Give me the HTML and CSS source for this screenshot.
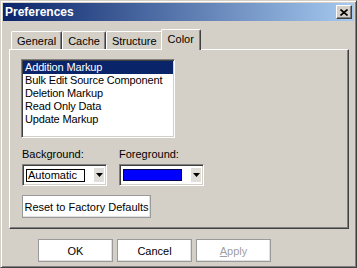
FILE: index.html
```html
<!doctype html>
<html>
<head>
<meta charset="utf-8">
<meta name="viewport" content="width=device-width, initial-scale=1">
<link rel="stylesheet" href="styles.css">
</head>
<body>
<div class="window">
    <div class="titlebar">
        <span class="titlebar__title">Preferences</span>
        <div class="titlebar__close">
            <svg width="8" height="7" viewBox="0 0 8 7"><path d="M0.5 0.5L7.5 6.5M7.5 0.5L0.5 6.5" stroke="#000" stroke-width="1.6" fill="none"/></svg>
        </div>
    </div>
    <div class="content">
        <div class="tabs">
            <div class="tab">General</div>
            <div class="tab">Cache</div>
            <div class="tab">Structure</div>
            <div class="tab tab--active">Color</div>
        </div>
        <div class="panel">
            <div class="list">
                <div class="list__item list__item--selected">Addition Markup</div>
                <div class="list__item">Bulk Edit Source Component</div>
                <div class="list__item">Deletion Markup</div>
                <div class="list__item">Read Only Data</div>
                <div class="list__item">Update Markup</div>
            </div>
            <div class="fields">
                <div class="field">
                    <div class="field__label">Background:</div>
                    <div class="combo">
                        <div class="combo__value">Automatic</div>
                        <div class="combo__arrow"><svg width="7" height="4" viewBox="0 0 7 4"><polygon points="0,0 7,0 3.5,4" fill="#000"/></svg></div>
                    </div>
                </div>
                <div class="field">
                    <div class="field__label">Foreground:</div>
                    <div class="combo">
                        <div class="combo__swatch"></div>
                        <div class="combo__arrow"><svg width="7" height="4" viewBox="0 0 7 4"><polygon points="0,0 7,0 3.5,4" fill="#000"/></svg></div>
                    </div>
                </div>
            </div>
            <div class="button button--reset">Reset to Factory Defaults</div>
        </div>
        <div class="actions">
            <div class="button">OK</div>
            <div class="button">Cancel</div>
            <div class="button button--disabled"><u>A</u>pply</div>
        </div>
    </div>
</div>
</body>
</html>
```

FILE: styles.css
```css
body {
    margin: 0;
    font-family: "Liberation Sans", Arial, sans-serif;
    font-size: 11px;
    background-color: #d4d0c8;
}
.window {
    width: 357px;
    height: 268px;
    box-sizing: border-box;
    border: 1px solid;
    border-color: #d4d0c8 #404040 #404040 #d4d0c8;
    box-shadow: inset 1px 1px #fff, inset -1px -1px #808080;
    padding: 2px;
    background-color: #d4d0c8;
    display: flex;
    flex-direction: column;
}
.titlebar {
    height: 18px;
    display: flex;
    align-items: center;
    justify-content: space-between;
    padding: 0 2px;
    background: linear-gradient(to right, #0a246a, #a6caf0);
}
.titlebar__title {
    color: white;
    font-weight: bold;
    font-size: 12px;
}
.titlebar__close {
    width: 16px;
    height: 14px;
    box-sizing: border-box;
    display: flex;
    align-items: center;
    justify-content: center;
    background-color: #d4d0c8;
    border: 1px solid;
    border-color: #fff #404040 #404040 #fff;
    box-shadow: inset -1px -1px #808080;
}
.content {
    padding: 8px 0 0 6px;
}
.tabs {
    display: flex;
    align-items: flex-end;
    height: 20px;
    padding-left: 2px;
}
.tab {
    height: 18px;
    box-sizing: border-box;
    padding: 2px 5px 0 5px;
    line-height: 14px;
    border-top: 1px solid #fff;
    border-left: 1px solid #fff;
    border-right: 1px solid #404040;
    box-shadow: inset -1px 0 #808080;
    border-radius: 2px 2px 0 0;
    background-color: #d4d0c8;
}
.tab--active {
    height: 21px;
    margin: 0 -2px -1px -2px;
    padding: 2px 6px 0 6px;
    position: relative;
    z-index: 1;
}
.panel {
    width: 340px;
    height: 180px;
    box-sizing: border-box;
    border: 1px solid;
    border-color: #fff #404040 #404040 #fff;
    box-shadow: inset -1px -1px #808080;
    padding: 9px 0 0 11px;
}
.list {
    width: 154px;
    height: 79px;
    box-sizing: border-box;
    border: 1px solid;
    border-color: #808080 #fff #fff #808080;
    box-shadow: inset 1px 1px #404040, inset -1px -1px #d4d0c8;
    background-color: white;
    padding: 1px 1px 0 1px;
}
.list__item {
    line-height: 13px;
    padding-left: 2px;
    white-space: nowrap;
    letter-spacing: -0.15px;
}
.list__item--selected {
    background-color: #0a246a;
    color: white;
}
.fields {
    display: flex;
    gap: 12px;
    margin: 10px 0 0 1px;
}
.field__label {
    line-height: 13px;
    margin-bottom: 3px;
}
.combo {
    width: 85px;
    height: 22px;
    box-sizing: border-box;
    border: 1px solid;
    border-color: #808080 #fff #fff #808080;
    box-shadow: inset 1px 1px #404040, inset -1px -1px #d4d0c8;
    background-color: white;
    display: flex;
    align-items: center;
    padding: 0 2px 0 3px;
}
.combo__value {
    width: 59px;
    height: 13px;
    box-sizing: border-box;
    border: 1px solid #000;
    line-height: 11px;
    padding-left: 1px;
}
.combo__swatch {
    width: 59px;
    height: 12px;
    box-sizing: border-box;
    border: 1px solid #000050;
    background-color: #0000ff;
}
.combo__arrow {
    width: 10px;
    height: 14px;
    margin-left: auto;
    display: flex;
    align-items: center;
    justify-content: center;
    background-color: #e0ded8;
}
.button {
    width: 75px;
    height: 23px;
    box-sizing: border-box;
    display: flex;
    align-items: center;
    justify-content: center;
    background-color: white;
    border: 1px solid #9a9a9a;
    box-shadow: inset -1px -1px #e0e0e0;
}
.button--reset {
    width: 129px;
    margin: 9px 0 0 1px;
}
.button--disabled {
    color: #a0a0a0;
}
.actions {
    display: flex;
    gap: 4px;
    margin: 10px 0 0 29px;
}
```
